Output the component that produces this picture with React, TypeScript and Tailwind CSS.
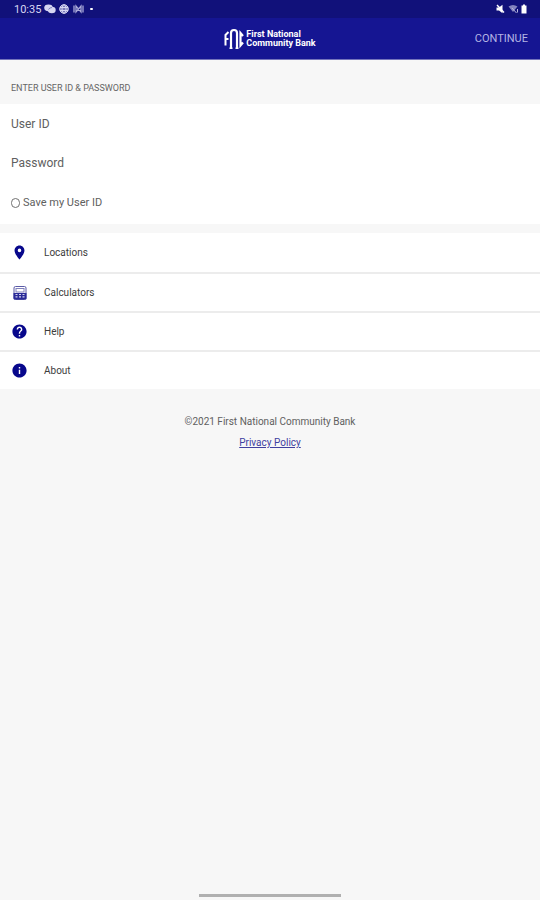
import React, { useState } from "react";
import { MdHelp, MdInfo, MdLocationOn } from "react-icons/md";

const links = [
  { name: "Locations", icon: <MdLocationOn size={17} /> },
  { name: "Calculators", icon: <CalculatorIcon /> },
  { name: "Help", icon: <MdHelp size={17} /> },
  { name: "About", icon: <MdInfo size={17} /> },
];

function CalculatorIcon() {
  return (
    <svg width="14" height="14" viewBox="0 0 14 14" fill="none">
      <rect x="1" y="0.5" width="12" height="13" rx="1.5" stroke="#5a5aa6" />
      <rect x="3" y="2.5" width="8" height="3.5" stroke="#8080bc" />
      <path d="M0.5 7h13v5.5q0 1-1 1h-11q-1 0-1-1z" fill="#2a2a98" />
      <path
        d="M2.5 8.5h2M6 8.5h2M9.5 8.5h2M2.5 10.8h2M6 10.8h2M9.5 10.8h2"
        stroke="#d4d4ee"
        strokeWidth="1.2"
      />
    </svg>
  );
}

function StatusBar() {
  return (
    <div className="flex h-[18px] items-center justify-between bg-[#11117a] pl-[14px] pr-[13px] text-[#d6d6f2]">
      <div className="flex items-center">
        <span className="w-[30px] text-[11px] leading-none">10:35</span>
        <svg width="12" height="10" viewBox="0 0 12 10" fill="currentColor">
          <ellipse cx="4.5" cy="3.8" rx="4.3" ry="3.4" />
          <ellipse cx="7.8" cy="6" rx="3.9" ry="3.2" />
          <path d="M4.5 5.5q1-2 3.5-2" stroke="#6a6ab0" strokeWidth="0.8" fill="none" />
        </svg>
        <svg className="ml-[3px]" width="10" height="10" viewBox="0 0 10 10" fill="none" stroke="currentColor">
          <circle cx="5" cy="5" r="4.3" fill="#7777b8" />
          <ellipse cx="5" cy="5" rx="2" ry="4.3" />
          <path d="M1 3.5h8M1 6.5h8" />
        </svg>
        <svg className="ml-1" width="11" height="10" viewBox="0 0 11 10" fill="none" stroke="#a9a9d8">
          <path d="M1 1.5v7M10 1.5v7M3 2v6l5-6v6z" strokeWidth="1.3" />
        </svg>
        <span className="ml-[6px] h-[2px] w-[3px] rounded-full bg-white" />
      </div>
      <div className="flex items-center">
        <svg width="9" height="10" viewBox="0 0 9 10" fill="#ffffff">
          <path d="M0.5 3.5H3L6.5 0.8v8.4L3 6.5H0.5z" />
          <path d="M1 1l7 7.5" stroke="#ffffff" strokeWidth="1.4" />
        </svg>
        <svg className="ml-[3px]" width="11" height="10" viewBox="0 0 11 10" fill="none">
          <path d="M0.5 2.5q4.5-3 9 0L5 8z" fill="#8585bf" />
          <path d="M4 4l4.5 5M9.5 8.5V5" stroke="#b6b6de" />
        </svg>
        <svg className="ml-[2px]" width="6" height="10" viewBox="0 0 6 10" fill="#ffffff">
          <path d="M2 0.5h2v1h1.5v8h-5v-8H2z" />
        </svg>
      </div>
    </div>
  );
}

function Logo() {
  return (
    <div className="flex items-center justify-center gap-[2px] text-white">
      <svg width="20" height="22" viewBox="0 0 20 22" fill="none" stroke="currentColor">
        <path d="M1.5 17.5V7L4.5 4M1.5 11H4.5" strokeWidth="2" />
        <path d="M7 20V5Q7 2 10 2T13 5V20" strokeWidth="2.2" />
        <path d="M5.5 20.3h3M11.5 20.3h3" strokeWidth="1.5" />
        <path d="M19 8L16.5 5V17.5L19 14.5" strokeWidth="2.2" />
      </svg>
      <div className="pt-px text-[9px] font-bold leading-[9px]">
        <p>First National</p>
        <p>Community Bank</p>
      </div>
    </div>
  );
}

export default function App() {
  const [userId, setUserId] = useState("");
  const [password, setPassword] = useState("");
  const [save, setSave] = useState(false);

  return (
    <form
      className="flex min-h-screen flex-col bg-[#f7f7f7] font-[Roboto,sans-serif] text-[#606060]"
      onSubmit={(e) => e.preventDefault()}
    >
      <StatusBar />
      <header className="grid h-[42px] grid-cols-[1fr_auto_1fr] items-center border-b border-[#7474bb] bg-[#151592] px-3">
        <span />
        <Logo />
        <button type="submit" className="justify-self-end pt-[2px] text-[11px] text-[#b4b4e4]">
          CONTINUE
        </button>
      </header>

      <h1 className="flex h-11 items-center px-[11px] pt-[14px] text-[9px] text-[#666666]">
        ENTER USER ID &amp; PASSWORD
      </h1>
      <div className="bg-white px-[11px]">
        <input
          aria-label="User ID"
          placeholder="User ID"
          value={userId}
          onChange={(e) => setUserId(e.target.value)}
          className="block h-10 w-full text-[12px] outline-none placeholder:text-[#606060]"
        />
        <input
          aria-label="Password"
          type="password"
          placeholder="Password"
          value={password}
          onChange={(e) => setPassword(e.target.value)}
          className="block h-[38px] w-full text-[12px] outline-none placeholder:text-[#606060]"
        />
        <label className="flex h-[42px] items-center gap-[3px] text-[11px]">
          <input
            type="checkbox"
            checked={save}
            onChange={(e) => setSave(e.target.checked)}
            className="h-[10px] w-[9px] appearance-none rounded-full border border-[#707070] checked:bg-[#15158f]"
          />
          Save my User ID
        </label>
      </div>

      <nav className="mt-[9px] bg-white">
        {links.map((link) => (
          <a
            key={link.name}
            href="#"
            className="flex h-[39px] items-center border-[#ececec] pl-[10px] text-[10px] text-[#3c3c3c] not-first:border-t-2"
          >
            <span className="mr-[15px] flex w-[19px] justify-center text-[#08088c]">{link.icon}</span>
            {link.name}
          </a>
        ))}
      </nav>

      <footer className="flex flex-1 flex-col items-center pt-[27px] text-[10px] leading-[12px]">
        <p>©2021 First National Community Bank</p>
        <a href="#" className="mt-[9px] text-[#4040a0] underline">
          Privacy Policy
        </a>
        <div className="mb-[3px] mt-auto h-[3px] w-[142px] bg-[#b0b0b0]" />
      </footer>
    </form>
  );
}
